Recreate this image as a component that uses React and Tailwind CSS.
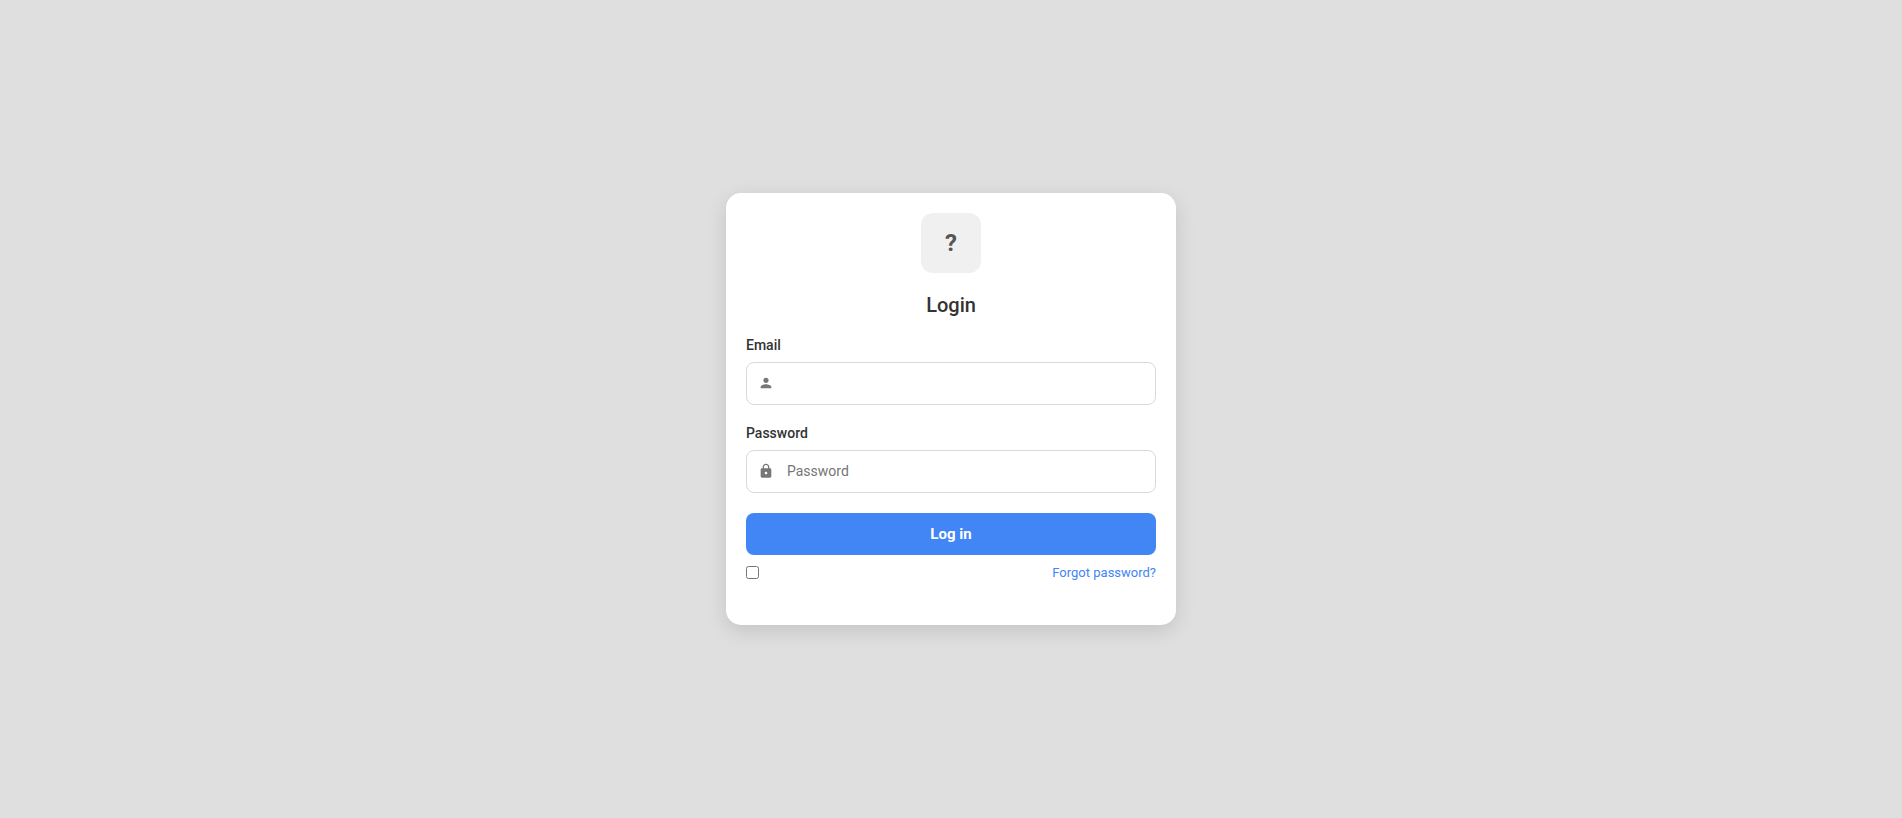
import React, { useState } from 'react';
import { MdLock, MdPerson } from 'react-icons/md';

const Field = ({ id, label, icon: Icon, ...inputProps }) => (
  <div className="mb-5">
    <label htmlFor={id} className="block mb-2 text-sm leading-[17px] font-medium text-[#333]">
      {label}
    </label>
    <div className="relative">
      <Icon className="absolute left-3 top-[13px] size-4 text-[#777]" />
      <input
        id={id}
        className="block w-full rounded-lg border border-[#d9d9d9] bg-white py-3 pl-10 pr-3 text-sm leading-[17px] text-[#333] placeholder:text-[#757575] outline-none focus:border-[#4285f4]"
        {...inputProps}
      />
    </div>
  </div>
);

const App = () => {
  const [email, setEmail] = useState('');
  const [password, setPassword] = useState('');
  const [remember, setRemember] = useState(false);

  const handleSubmit = (e) => {
    e.preventDefault();
  };

  return (
    <div className="flex min-h-screen items-center justify-center bg-[#dfdfdf] font-['Roboto',sans-serif]">
      <div className="w-full max-w-[450px] rounded-[15px] bg-white px-5 pt-5 pb-[42px] shadow-[0_6px_20px_rgba(0,0,0,0.12)]">
        <div className="mx-auto mb-5 flex size-[60px] items-center justify-center rounded-xl bg-[#f0f0f0] text-2xl leading-7 font-bold text-[#555]">
          ?
        </div>
        <h1 className="mb-5 text-center text-xl leading-6 font-medium text-[#333]">Login</h1>

        <form onSubmit={handleSubmit}>
          <Field
            id="email"
            label="Email"
            icon={MdPerson}
            type="email"
            value={email}
            onChange={(e) => setEmail(e.target.value)}
          />
          <Field
            id="password"
            label="Password"
            icon={MdLock}
            type="password"
            placeholder="Password"
            value={password}
            onChange={(e) => setPassword(e.target.value)}
          />

          <button
            type="submit"
            className="block w-full cursor-pointer rounded-lg bg-[#4285f4] py-3 text-[15px] leading-[18px] font-bold text-white hover:bg-[#3367d6]"
          >
            Log in
          </button>

          <div className="mt-2 flex h-5 items-start justify-between">
            <input
              type="checkbox"
              aria-label="Remember me"
              className="mt-[3px] size-[13px]"
              checked={remember}
              onChange={(e) => setRemember(e.target.checked)}
            />
            <a href="#forgot" className="text-[13px] leading-5 text-[#4285f4] hover:underline">
              Forgot password?
            </a>
          </div>
        </form>
      </div>
    </div>
  );
};

export default App;
